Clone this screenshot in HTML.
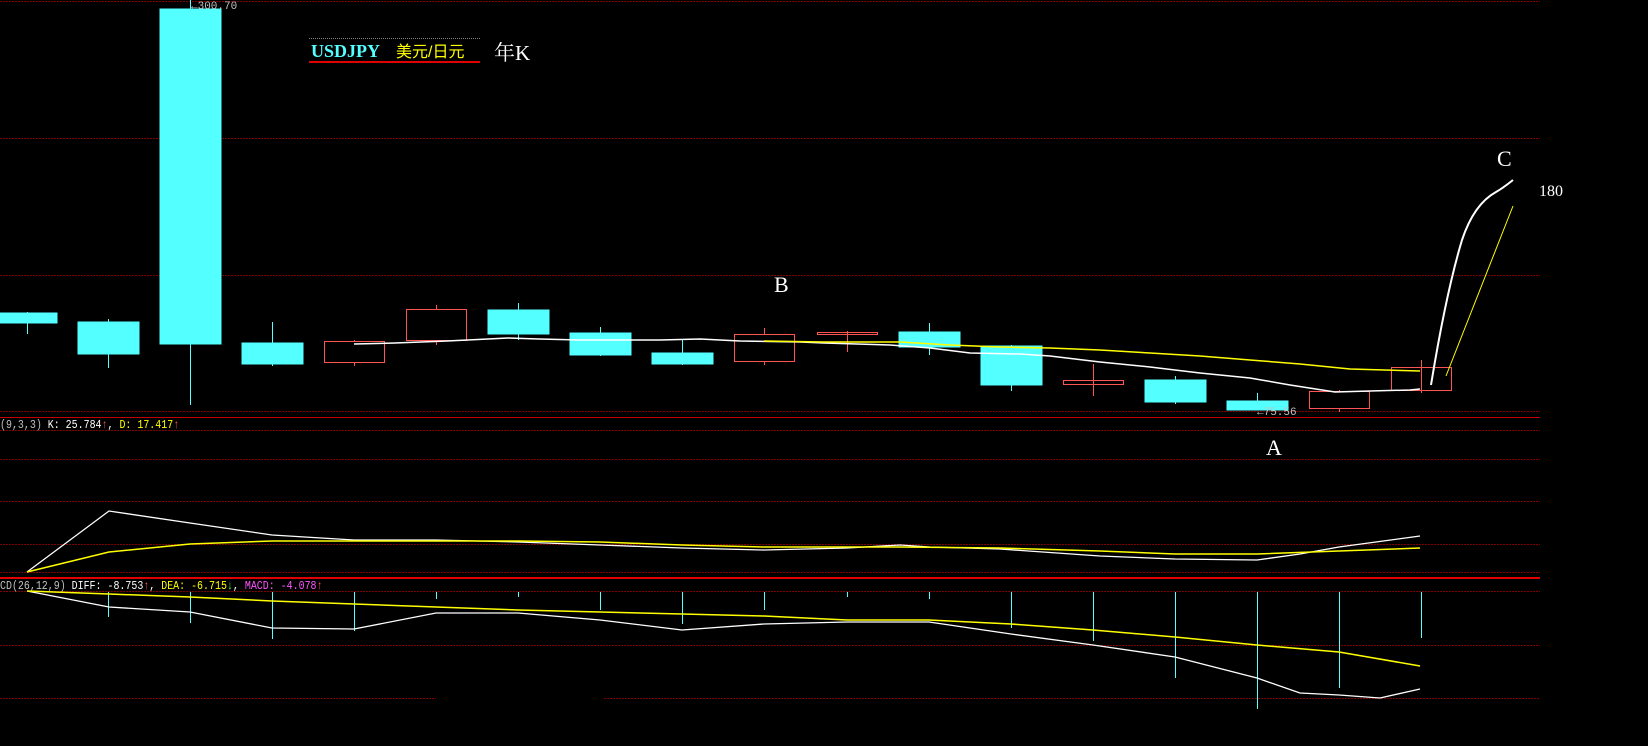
<!DOCTYPE html>
<html><head><meta charset="utf-8"><style>
html,body{margin:0;padding:0;background:#000;width:1648px;height:746px;overflow:hidden}
svg{display:block}
text{font-family:"Liberation Mono","Noto Sans CJK SC",monospace}
</style></head><body>
<svg width="1648" height="746" viewBox="0 0 1648 746" xmlns="http://www.w3.org/2000/svg">
<g stroke="#800000" stroke-width="1" stroke-dasharray="2,1" fill="none">
<line x1="0" y1="1.5" x2="1540" y2="1.5"/>
<line x1="0" y1="138.5" x2="1540" y2="138.5"/>
<line x1="0" y1="275.5" x2="1540" y2="275.5"/>
<line x1="0" y1="411.5" x2="1540" y2="411.5"/>
<line x1="0" y1="430.5" x2="1540" y2="430.5"/>
<line x1="0" y1="459.5" x2="1540" y2="459.5"/>
<line x1="0" y1="501.5" x2="1540" y2="501.5"/>
<line x1="0" y1="544.5" x2="1540" y2="544.5"/>
<line x1="0" y1="572.5" x2="1540" y2="572.5"/>
<line x1="0" y1="591.5" x2="1540" y2="591.5"/>
<line x1="0" y1="645.5" x2="1540" y2="645.5"/>
<line x1="0" y1="698.5" x2="436" y2="698.5"/>
<line x1="604" y1="698.5" x2="1540" y2="698.5"/>
</g>
<line x1="0" y1="417.5" x2="1540" y2="417.5" stroke="#c00000"/>
<line x1="0" y1="578" x2="1540" y2="578" stroke="#e00000" stroke-width="2"/>

<g stroke="#54ffff" fill="#54ffff">
<line x1="27.5" y1="312" x2="27.5" y2="334"/><rect x="-3" y="313" width="60" height="10"/>
<line x1="108.5" y1="319" x2="108.5" y2="368"/><rect x="78" y="322" width="61" height="32"/>
<line x1="190.5" y1="0" x2="190.5" y2="405"/><rect x="160" y="9" width="61" height="335"/>
<line x1="272.5" y1="322" x2="272.5" y2="366"/><rect x="242" y="343" width="61" height="21"/>
<line x1="518.5" y1="303" x2="518.5" y2="340"/><rect x="488" y="310" width="61" height="24"/>
<line x1="600.5" y1="327" x2="600.5" y2="356"/><rect x="570" y="333" width="61" height="22"/>
<line x1="682.5" y1="340" x2="682.5" y2="365"/><rect x="652" y="353" width="61" height="11"/>
<line x1="929.5" y1="323" x2="929.5" y2="355"/><rect x="899" y="332" width="61" height="15"/>
<line x1="1011.5" y1="345" x2="1011.5" y2="391"/><rect x="981" y="346" width="61" height="39"/>
<line x1="1175.5" y1="376" x2="1175.5" y2="404"/><rect x="1145" y="380" width="61" height="22"/>
<line x1="1257.5" y1="393" x2="1257.5" y2="410"/><rect x="1227" y="401" width="61" height="9"/>
</g>
<g stroke="#ff5454" fill="none">
<line x1="354.5" y1="340" x2="354.5" y2="366"/><rect x="324.5" y="341.5" width="60" height="21" fill="#000"/>
<line x1="436.5" y1="305" x2="436.5" y2="345"/><rect x="406.5" y="309.5" width="60" height="31" fill="#000"/>
<line x1="764.5" y1="328" x2="764.5" y2="365"/><rect x="734.5" y="334.5" width="60" height="27" fill="#000"/>
<line x1="847.5" y1="331" x2="847.5" y2="352"/><rect x="817.5" y="332.5" width="60" height="2"/>
<line x1="1093.5" y1="364" x2="1093.5" y2="396"/><rect x="1063.5" y="380.5" width="60" height="4"/>
<line x1="1339.5" y1="390" x2="1339.5" y2="412"/><rect x="1309.5" y="391.5" width="60" height="17" fill="#000"/>
<line x1="1421.5" y1="360" x2="1421.5" y2="393"/><rect x="1391.5" y="367.5" width="60" height="23" fill="none"/>
</g>
<polyline fill="none" stroke="#fff" stroke-width="1.5" points="354,344 395,343 447,341 488,339 508,338 539,339 580,340 660,340 700,339 740,341 800,342 824,343 890,345 930,348 970,353 1020,354 1050,356 1100,362 1150,367 1200,373 1250,378 1290,385 1335,392 1370,391 1410,390 1420,389"/>
<polyline fill="none" stroke="#ffff00" stroke-width="1.5" points="764,341 824,342 900,342 950,345 1000,347 1050,348 1100,350 1150,353 1200,356 1250,360 1300,364 1350,369 1420,371"/>
<path d="M1431,385 C1440,330 1450,280 1462,240 C1472,210 1485,198 1496,192 C1503,188 1508,184 1513,180" fill="none" stroke="#fff" stroke-width="2"/>
<line x1="1446" y1="376" x2="1513" y2="206" stroke="#ffff00" stroke-width="1"/>

<text x="191" y="9" fill="#c0c0c0" font-size="11">←300.70</text>
<text x="1257" y="415" fill="#c0c0c0" font-size="11">←75.56</text>

<line x1="309" y1="38.5" x2="480" y2="38.5" stroke="#808080" stroke-dasharray="1,1"/>
<text x="311" y="57" fill="#54ffff" font-size="18" font-weight="bold" style="font-family:'Liberation Serif',serif">USDJPY</text>
<text x="396" y="57" fill="#ffff00" font-size="16" style="font-family:'Liberation Sans','Noto Sans CJK SC',sans-serif">美元/日元</text>
<line x1="309" y1="62" x2="480" y2="62" stroke="#e00000" stroke-width="2"/>
<text x="494" y="60" fill="#fff" font-size="21" style="font-family:'Liberation Serif','Noto Serif CJK SC',serif">年K</text>

<g fill="#fff" font-size="22">
<text x="774" y="292" style="font-family:'Liberation Serif',serif">B</text>
<text x="1266" y="455" style="font-family:'Liberation Serif',serif">A</text>
<text x="1497" y="166" style="font-family:'Liberation Serif',serif">C</text>
<text x="1539" y="196" font-size="16" style="font-family:'Liberation Serif',serif">180</text>
</g>

<text y="428" font-size="12" transform="scale(0.83,1)"><tspan x="0" fill="#c0c0c0">(9,3,3)</tspan><tspan fill="#fff"> K: 25.784</tspan><tspan fill="#ff5454">↑</tspan><tspan fill="#fff">, </tspan><tspan fill="#ffff00">D: 17.417</tspan><tspan fill="#ff5454">↑</tspan></text>
<polyline fill="none" stroke="#fff" stroke-width="1.3" points="27,572 109,511 190,523 272,535 354,540 436,540 518,542 600,545 682,548 764,550 847,548 900,545 930,547 1000,549 1100,556 1175,559 1257,560 1300,554 1339,547 1420,536"/>
<polyline fill="none" stroke="#ffff00" stroke-width="1.5" points="27,572 109,552 190,544 272,541 354,541 436,541 518,541 600,542 682,545 764,547 824,547 900,547 1000,548 1100,551 1175,554 1257,554 1339,551 1420,548"/>

<text y="589" font-size="12" transform="scale(0.83,1)"><tspan x="0" fill="#c0c0c0">CD(26,12,9) </tspan><tspan fill="#fff">DIFF: -8.753</tspan><tspan fill="#ff5454">↑</tspan><tspan fill="#fff">, </tspan><tspan fill="#ffff00">DEA: -6.715</tspan><tspan fill="#54ff54">↓</tspan><tspan fill="#fff">, </tspan><tspan fill="#ff54ff">MACD: -4.078</tspan><tspan fill="#ff5454">↑</tspan></text>
<g stroke="#54ffff" stroke-width="1">
<line x1="108.5" y1="592" x2="108.5" y2="617"/>
<line x1="190.5" y1="592" x2="190.5" y2="623"/>
<line x1="272.5" y1="592" x2="272.5" y2="639"/>
<line x1="354.5" y1="592" x2="354.5" y2="631"/>
<line x1="436.5" y1="592" x2="436.5" y2="599"/>
<line x1="518.5" y1="592" x2="518.5" y2="597"/>
<line x1="600.5" y1="592" x2="600.5" y2="610"/>
<line x1="682.5" y1="592" x2="682.5" y2="624"/>
<line x1="764.5" y1="592" x2="764.5" y2="610"/>
<line x1="847.5" y1="592" x2="847.5" y2="597"/>
<line x1="929.5" y1="592" x2="929.5" y2="599"/>
<line x1="1011.5" y1="592" x2="1011.5" y2="628"/>
<line x1="1093.5" y1="592" x2="1093.5" y2="641"/>
<line x1="1175.5" y1="592" x2="1175.5" y2="678"/>
<line x1="1257.5" y1="592" x2="1257.5" y2="709"/>
<line x1="1339.5" y1="592" x2="1339.5" y2="688"/>
<line x1="1421.5" y1="592" x2="1421.5" y2="638"/>
</g>
<polyline fill="none" stroke="#fff" stroke-width="1.3" points="27,591 109,607 190,612 272,628 354,629 436,613 518,613 600,620 682,630 764,624 847,622 929,622 1011,634 1093,645 1175,657 1257,678 1300,693 1339,695 1380,698 1420,689"/>
<polyline fill="none" stroke="#ffff00" stroke-width="1.5" points="27,591 109,594 190,597 272,601 354,604 436,607 518,610 600,612 682,614 764,616 847,620 929,620 1011,624 1093,630 1175,637 1257,645 1339,652 1420,666"/>
</svg>
</body></html>
